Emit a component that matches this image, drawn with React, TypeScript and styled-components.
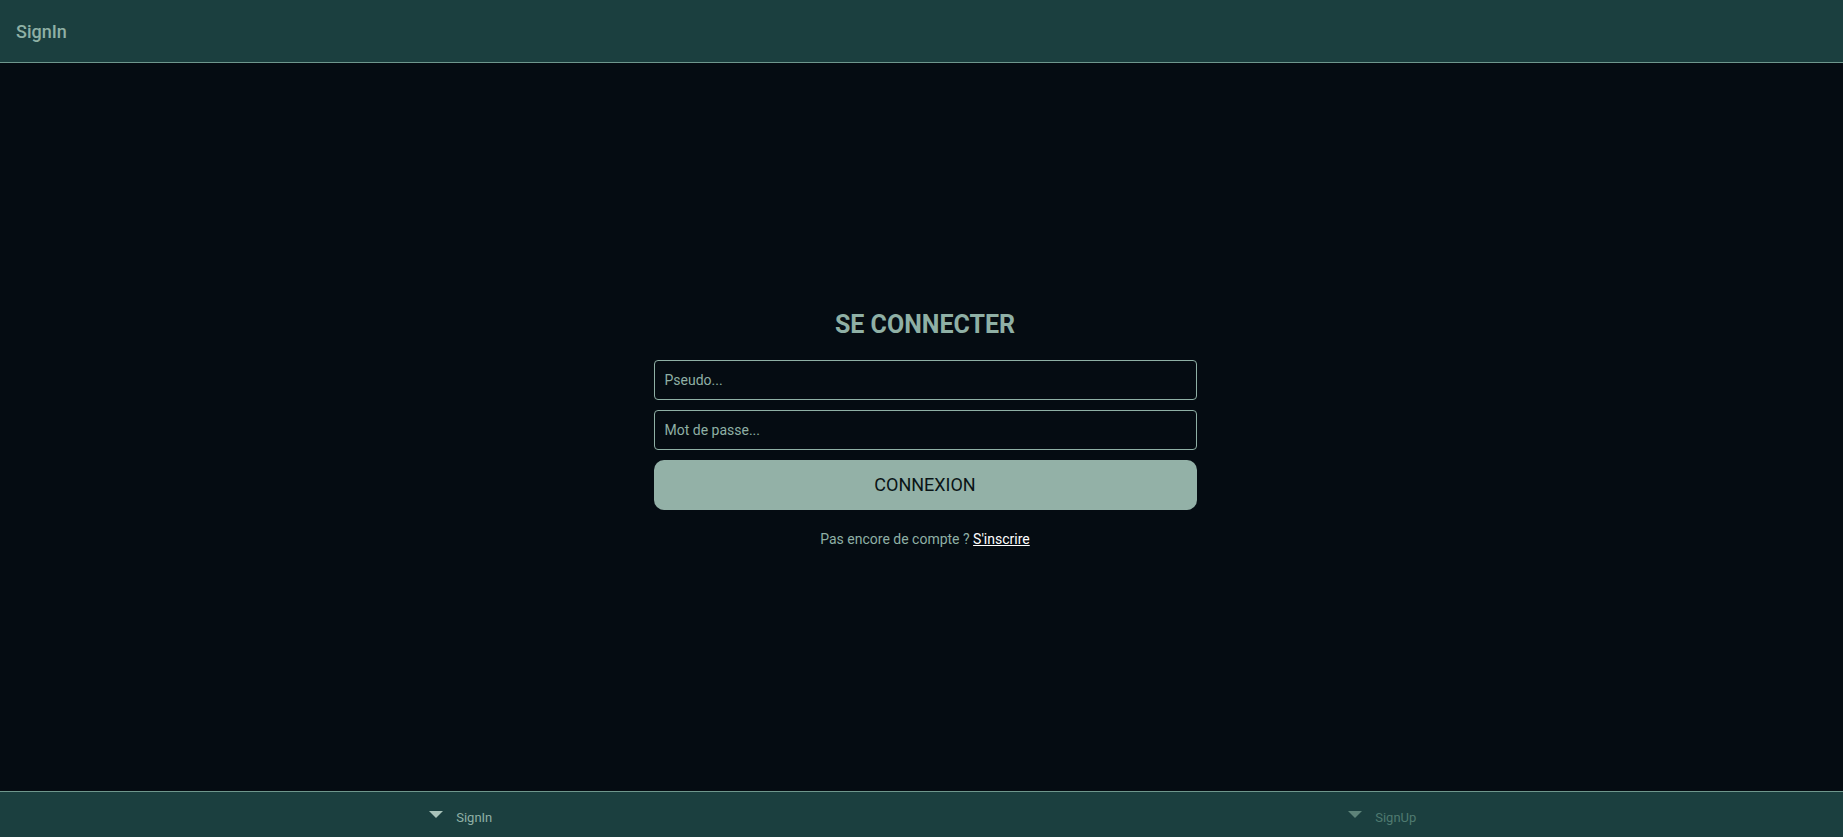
import React from "react";
import styled, { createGlobalStyle } from "styled-components";

const Global = createGlobalStyle`
  html, body { margin: 0; padding: 0; height: 100%; }
  body { background: #050c12; font-family: Roboto, "Noto Sans", Arial, sans-serif; }
  #root { height: 100vh; }
  * { box-sizing: border-box; }
`;

const Page = styled.div`
  display: flex;
  flex-direction: column;
  height: 837px;
  background: #050c12;
`;

const Header = styled.header`
  height: 63px;
  flex: 0 0 63px;
  display: flex;
  align-items: center;
  padding: 0 16px 1px;
  background: #1b3f3f;
  border-bottom: 1px solid #6f978d;
`;

const HeaderTitle = styled.div`
  font-size: 18px;
  font-weight: 500;
  color: #8fb0a5;
  padding-top: 1px;
`;

const Main = styled.main`
  flex: 1;
  display: flex;
  align-items: center;
  justify-content: center;
  padding-left: 7px;
`;

const Form = styled.form`
  width: 543px;
  display: flex;
  flex-direction: column;
  align-items: stretch;
`;

const Title = styled.h1`
  margin: 2px 0 20px;
  text-align: center;
  font-size: 25px;
  font-weight: 700;
  color: #8fb0a5;
  line-height: 30px;
`;

const Input = styled.input`
  height: 40px;
  margin-bottom: 10px;
  padding: 0 10px;
  background: #050c12;
  border: 1px solid #8fb0a5;
  border-radius: 4px;
  color: #8fb0a5;
  font-family: Roboto, Arial, sans-serif;
  font-size: 14px;
  outline: none;
  &::placeholder { color: #8fb0a5; }
`;

const Button = styled.button`
  height: 50px;
  border: none;
  border-radius: 10px;
  background: #93b1a7;
  color: #0a1416;
  font-family: Roboto, Arial, sans-serif;
  font-size: 18px;
  cursor: pointer;
`;

const Footnote = styled.p`
  margin: 21px 0 0;
  text-align: center;
  font-size: 14px;
  line-height: 16px;
  color: #8fb0a5;
`;

const Link = styled.a`
  color: #ffffff;
  text-decoration: underline;
`;

const TabBar = styled.nav`
  flex: 0 0 46px;
  height: 46px;
  display: flex;
  background: #1b3f3f;
  border-top: 1px solid #6f978d;
`;

const Tab = styled.div<{ $active?: boolean }>`
  flex: 1;
  display: flex;
  align-items: center;
  justify-content: center;
  gap: 13px;
  padding-top: 6px;
  font-size: 13px;
  color: ${(p) => (p.$active ? "#8fb0a5" : "#4f7a70")};
`;

const Arrow = styled.svg<{ $active?: boolean }>`
  width: 14px;
  height: 8px;
  margin-top: -5px;
  fill: ${(p) => (p.$active ? "#a9c3ba" : "#5d8379")};
`;

const TabArrow = ({ active }: { active?: boolean }) => (
  <Arrow $active={active} viewBox="0 0 14 8">
    <path d="M0 0 H14 L7 7 Z" />
  </Arrow>
);

export default function App() {
  return (
    <>
      <Global />
      <Page>
        <Header>
          <HeaderTitle>SignIn</HeaderTitle>
        </Header>
        <Main>
          <Form onSubmit={(e) => e.preventDefault()}>
            <Title>SE CONNECTER</Title>
            <Input placeholder="Pseudo..." />
            <Input type="password" placeholder="Mot de passe..." />
            <Button type="submit">CONNEXION</Button>
            <Footnote>
              Pas encore de compte ? <Link href="#">S'inscrire</Link>
            </Footnote>
          </Form>
        </Main>
        <TabBar>
          <Tab $active>
            <TabArrow active />
            SignIn
          </Tab>
          <Tab>
            <TabArrow />
            SignUp
          </Tab>
        </TabBar>
      </Page>
    </>
  );
}
